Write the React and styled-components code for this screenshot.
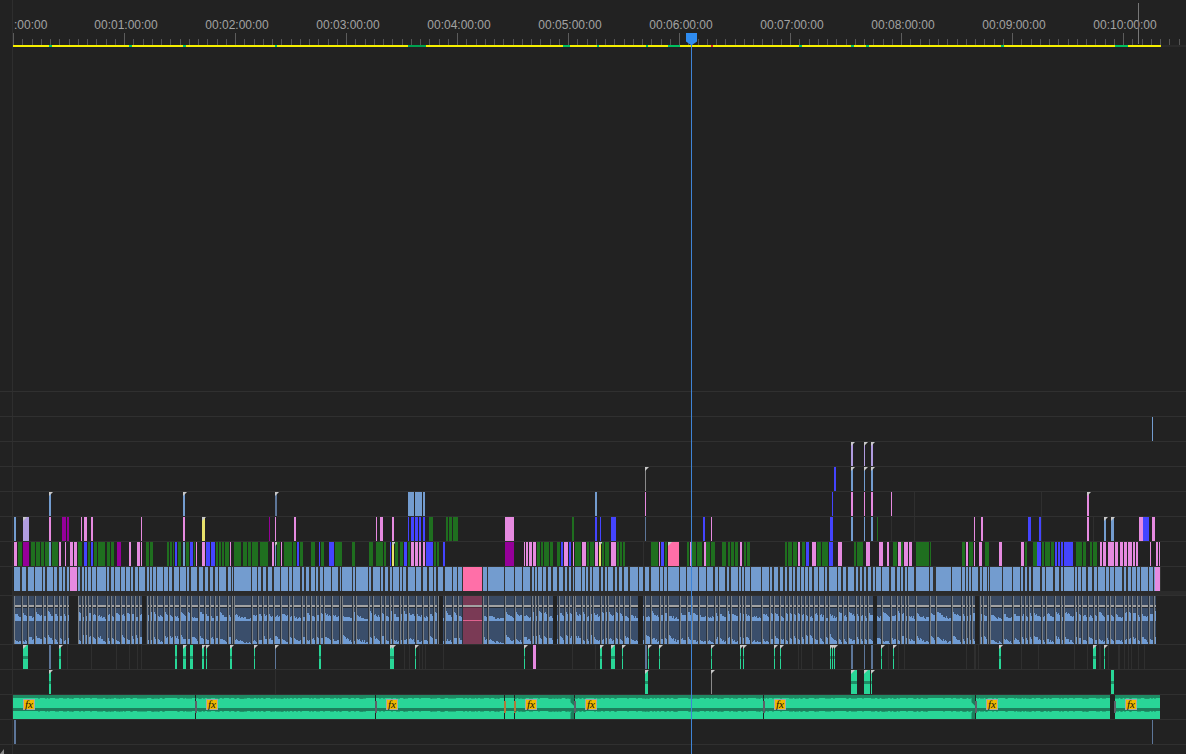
import React from 'react';
import styled, { createGlobalStyle } from 'styled-components';

const GUTTER = 13;
const MINUTE = 111;

const Global = createGlobalStyle`
  html, body { margin: 0; padding: 0; background: #222222; }
`;

const TONES = {
  g: '#1f6f1f',
  b: '#4444ff',
  p: '#e68ae0',
  m: '#96009a',
  l: '#739ccf',
  v: '#b09ce0',
  y: '#e8e26a',
  h: '#ff6fa8',
  d: '#2f2f2f',
  t: '#29d697',
  s: '#5d7699',
  w: '#8a8a8a',
};

// Each row is a list of clips: tone letter, start-end in page x, * for a corner flag
const ROWS = {
  r416: 'l1152-1153',
  r441: 'v851-853* v864-865* v871-873*',
  r466: 'b834-836 l851-853* l864-865* l871-873* w645-646*',
  r491: `l49-51* l183-185* s275-277* l408-414 l415-422 l423-425 l595-597 p645-646
    b832-833 p851-853 p864-865 p871-873 p891-892 d914-915 d1041-1042 p1087-1089*`,
  r516: `l14-16 v23-29* p49-51 m62-66 m67-69 p81-82 p84-87 p91-93 p141-142 p183-185 y202-205* m269-270
    p275-276 p294-296 p376-377 p380-383 p392-394 b408-409 b411-414 b415-418 b419-421 b423-425
    g429-433 g446-448 g449-452 g453-458 p505-514 g572-574 b595-597 b600-601 b611-616 s645-646
    b703-705 p711-712 b830-833 l851-853 l864-865 l871-873 g877-878 d891-892 d914-915 p974-975
    p981-983 b1028-1031 b1039-1041 d1041-1042 p1087-1089 d1093-1094 l1104-1106* l1111-1114*
    p1139-1143 b1143-1149 p1152-1155`,
  r541: `p14-17 g18-22 m23-29 g31-35 g36-40 g41-44 g45-49 l49-51 g52-58 p59-61 p65-66 p70-73 p74-77
    g78-82 b84-87 g88-90 b91-93 g94-97 g98-105 g107-110 g111-114 m117-121 p129-131 p137-140 p141-142
    g146-149 g150-153 g167-169 g170-172 g173-174 b175-177 g178-181 l183-185 g186-189 b190-193 g194-195
    p196-197 p202-205 b206-210 b211-215 g216-218 g219-221 g222-224 g225-229 p230-231 g234-241 g243-247
    g248-251 g252-258 g260-264 g264-268 p272-274 l275-276* g277-280 p281-282 g284-292 g293-296 b297-299
    g300-303 g311-315 b319-320 g321-324 b329-334 g335-342 g352-355 g369-373 g376-383 g384-386 b390-391
    y392-394* g395-398 g400-403 b404-407 g408-410 p411-414 p415-418 p419-421 p423-425 b426-433 g434-436
    g437-439 b443-445 m505-514 p524-525 p526-528 p529-532 p533-536 g537-540 g541-543 g544-549 g550-553
    g557-560 b561-563 p564-568 b569-571 p573-574 g575-581 p582-586 g587-589 g590-594 p595-598 y599-601*
    g602-604 g605-609 p611-616 g617-619 g620-622 g623-625 d643-644 g651-658 p659-660 b661-664 g665-667
    h668-679* g687-689 p690-691 g692-696 g697-702 p704-706 g706-710 g711-715 g722-726 g728-730 g731-734
    g735-738 p740-742 g744-746 g747-750 g785-787 g788-792 g793-797 p798-800 g802-805 b806-809 p812-816
    g817-821 g822-828 b829-833 p838-842 g854-856 g857-863 p866-870 p879-883 p887-889 g893-897 p898-901
    g901-903 p904-908 p909-912 g916-929 g930-931 g962-965 p966-968 g969-973 p974-975 p979-982 g985-989
    p999-1002 p1021-1024 g1025-1027 g1033-1037 b1037-1041 g1042-1044 g1045-1050 g1051-1054 b1055-1057
    b1058-1060 b1061-1063 b1064-1073 g1076-1082 g1083-1086 g1090-1092 g1093-1097 p1100-1102 p1103-1106
    p1108-1114 p1115-1118 p1120-1123 p1124-1127 p1128-1132 p1133-1135 p1136-1138 p1150-1151 p1156-1158
    p1159-1160`,
  r644: `t23-28* s49-51 t59-61* d67-68 d91-92 d116-117 d129-130 d137-138 d141-142 t175-177 t183-186* t190-193
    t202-204* t206-207* t230-232* t254-255* s275-276* t319-321 t390-392* t392-394* d404-405 d409-410 t415-416*
    d419-420 d422-423 d425-426 d443-444 t524-525* p533-536 d572-573 d595-596 t600-602* t611-615* t622-623*
    s645-647 t648-649* t659-660* t711-712* t740-741* t743-744* t774-775* t780-781* d798-799 d801-802 d812-813
    t830-831* t832-833* t834-835* s851-853 s864-865 s871-873 t881-882* d888-889 t893-894* d898-899 d904-905
    d966-967 d974-976 d978-979 t999-1001* d1021-1022 d1038-1039 d1074-1075 d1087-1088 t1093-1096* d1099-1101
    t1104-1105* d1108-1109 d1118-1120 d1124-1125 d1128-1129 d1131-1132 d1138-1139 d1144-1145`,
  r669: 't49-51* d275-276 t645-648* w711-712* t851-857* t864-870* t871-872* t1111-1114',
  r719: 's14-16 s1152-1153',
};

const parseClips = (text) =>
  [...text.matchAll(/([a-z])(\d+)-(\d+)(\*?)/g)].map((m) => ({
    tone: m[1],
    x: +m[2],
    w: +m[3] - +m[2],
    flag: m[4] === '*',
  }));

const seeded = (seed) => () => {
  seed = (seed + 0x6d2b79f5) | 0;
  let t = Math.imul(seed ^ (seed >>> 15), 1 | seed);
  t = (t + Math.imul(t ^ (t >>> 7), 61 | t)) ^ t;
  return ((t ^ (t >>> 14)) >>> 0) / 4294967296;
};

// long shots that stand out in the video row
const WIDE = [
  [70, 77], [97, 106], [157, 163], [234, 251], [342, 352], [356, 368], [463, 482], [483, 487], [488, 504],
  [505, 514], [515, 522], [575, 581], [630, 638], [651, 659], [668, 679], [680, 686], [751, 761], [762, 769],
  [829, 837], [916, 929], [936, 951], [952, 961], [990, 1002], [1003, 1012], [1013, 1020], [1064, 1074],
];

const buildShots = () => {
  const rnd = seeded(41);
  const sizes = [2, 2, 2, 3, 3, 3, 4, 4, 5, 6, 7];
  const shots = [];
  let x = 14;
  const fill = (limit) => {
    while (x < limit) {
      const w = Math.min(sizes[Math.floor(rnd() * sizes.length)], limit - x);
      shots.push({ x, w });
      x += w + (rnd() > 0.5 ? 2 : 1);
    }
  };
  WIDE.forEach(([a, b]) => {
    fill(a - 1);
    shots.push({ x: a, w: b - a });
    x = b + 1;
  });
  fill(1155);
  return shots;
};

const SHOTS = buildShots();
const AUDIO_GAPS = [[69, 78], [142, 146], [439, 443], [553, 557], [638, 643], [873, 877], [975, 979]];
const inAudioGap = (x) => AUDIO_GAPS.some(([a, b]) => x >= a && x < b);

// every shot starts loud and dies away, long shots end up nearly flat
const buildWave = (base, seed) => {
  const rnd = seeded(seed);
  let d = `M0 ${base}`;
  SHOTS.forEach((s) => {
    const start = 3 + rnd() * 6;
    for (let i = 0; i < s.w + 2; i += 1) {
      const x = s.x - GUTTER - 1 + i;
      const level = Math.max(1, start * Math.exp(-i / 7) + rnd() * 2.5 - 0.5);
      d += `H${x}V${Math.round(base - level)}`;
    }
  });
  return `${d}H1142V${base}Z`;
};

const buildTeeth = () => {
  const rnd = seeded(7);
  let d = '';
  for (let x = 24; x < 1147; x += 1) {
    if (x > 1096 && x < 1103) continue;
    if (rnd() > 0.72) d += `M${x} 3v1M${x} 16v1`;
  }
  return d;
};

const GREEN = [
  { x: 13, end: 195, fx: true },
  { x: 196, end: 375, fx: true },
  { x: 376, end: 504, fx: true },
  { x: 505, end: 514 },
  { x: 515, end: 574, fx: true, fade: true },
  { x: 575, end: 763, fx: true },
  { x: 764, end: 975, fx: true, fade: true },
  { x: 976, end: 1110, fx: true },
  { x: 1115, end: 1160, fx: true },
];

const WORK_MARKS = [
  [49, 3, '#00c060'], [129, 3, '#00c060'], [183, 3, '#00c060'], [275, 2, '#00c060'], [408, 18, '#00a050'],
  [563, 7, '#00c060'], [597, 2, '#00c060'], [646, 2, '#00c060'], [668, 12, '#00c060'], [711, 2, '#e02020'],
  [799, 3, '#00c060'], [851, 3, '#00c060'], [866, 3, '#00c060'], [1001, 3, '#00c060'], [1115, 13, '#00c060'],
];

const Page = styled.div`
  position: relative;
  width: 1186px;
  height: 754px;
  overflow: hidden;
  display: flex;
  flex-direction: column;
  background: #222222;
  font-family: "Liberation Sans", Arial, sans-serif;
`;

const Band = styled.div`
  display: flex;
  flex: ${(p) => (p.$grow ? '1' : 'none')};
  height: ${(p) => (p.$h ? `${p.$h}px` : 'auto')};
  box-sizing: border-box;
  border-top: ${(p) => (p.$line ? '1px solid #303030' : 'none')};
`;

const Gutter = styled.div`
  flex: none;
  width: ${GUTTER}px;
  box-sizing: border-box;
  border-right: 1px solid #2e2e2e;
`;

const Lane = styled.div`
  position: relative;
  flex: 1;
  min-width: 0;
`;

const RulerLane = styled.div`
  flex: 1;
  min-width: 0;
  overflow: hidden;
  display: flex;
  flex-direction: column;
`;

const Labels = styled.div`
  display: flex;
  height: 33px;
  box-sizing: border-box;
  padding-top: 18px;
`;

const TimeLabel = styled.span`
  flex: none;
  width: ${MINUTE}px;
  text-align: center;
  font-size: 12px;
  line-height: 15px;
  color: #a2a2a2;
`;

// the zero label only shows its tail before the lane edge
const FirstLabel = styled(TimeLabel)`
  width: 57.5px;
  padding-left: 1px;
  box-sizing: border-box;
  text-align: left;
`;

const Ticks = styled.div`
  display: flex;
  height: 12px;
`;

const MinuteTicks = styled.div`
  flex: none;
  width: ${MINUTE}px;
  display: flex;
  align-items: flex-end;
`;

const Tick = styled.i`
  flex: 1;
  height: ${(p) => (p.$major ? '12px' : '6px')};
  box-sizing: border-box;
  border-left: 1px solid ${(p) => (p.$major ? '#5c5c5c' : '#555555')};
`;

const WorkArea = styled.div`
  position: relative;
  height: 2px;
  background: #2a2a2a;
`;

const WorkBar = styled.div`
  width: 1148px;
  height: 2px;
  background: #f6f000;
`;

const WorkMark = styled.i`
  position: absolute;
  top: 0;
  height: 2px;
`;

const Clip = styled.div`
  position: absolute;
  top: 0;
  bottom: 0;
  background: ${(p) => TONES[p.$tone]};

  ${(p) => p.$tone === 't' && `
    background: linear-gradient(#29d697 0 11px, #1c8f66 11px 14px, #29d697 14px);
  `}

  ${(p) => p.$flag && `
    &::before {
      content: '';
      position: absolute;
      left: 0;
      top: 0;
      width: 4px;
      height: 4px;
      background: #c8c8c8;
      clip-path: polygon(0 0, 100% 0, 0 100%);
    }
  `}
`;

const Clips = ({ text }) =>
  parseClips(text).map((c) => (
    <Clip key={c.x + c.tone} $tone={c.tone} $flag={c.flag} style={{ left: c.x - GUTTER, width: c.w }} />
  ));

const VideoBed = styled.div`
  position: absolute;
  left: 1px;
  width: 1147px;
  top: 0;
  bottom: 0;
  background: #333333;
`;

const Shot = styled.div`
  position: absolute;
  top: 0;
  bottom: 0;
  background: ${(p) => p.$bg};
`;

const Divider = styled.div`
  height: 4px;
  background: #2b2b2b;
`;

const AudioBed = styled.div`
  position: absolute;
  left: 1px;
  width: 1142px;
  top: 0;
  bottom: 0;
  background: linear-gradient(
    #3a4a62 0 9px,
    #a2a2a2 9px 11px,
    #232a34 11px 12px,
    #3a4e6b 12px
  );
`;

const WaveSvg = styled.svg`
  position: absolute;
  left: 1px;
  top: 0;
`;

const AudioCut = styled.div`
  position: absolute;
  top: 0;
  bottom: 0;
  width: 1px;
  background: #7c8186;
  box-shadow: -1px 0 0 #2a323d;
`;

const AudioGap = styled.div`
  position: absolute;
  top: 0;
  bottom: 0;
  background: #222222;
`;

const MutedClip = styled.div`
  position: absolute;
  top: 0;
  bottom: 0;
  background:
    linear-gradient(#e0628f, #e0628f) 0 24px / 100% 1px no-repeat,
    linear-gradient(#e0628f, #e0628f) 0 48px / 100% 1px no-repeat,
    linear-gradient(#7a3a55 0 9px, #a2a2a2 9px 11px, #5a2a3e 11px 12px, #7a3a55 12px);
`;

const GreenClip = styled.div`
  position: absolute;
  top: 0;
  bottom: 0;
  background: linear-gradient(#1d8a63 0 3px, #29d697 3px 13px, #1d7f5c 13px 16px, #29d697 16px);
`;

const Fade = styled.div`
  position: absolute;
  right: 0;
  top: 0;
  bottom: 0;
  width: 5px;
  background: #1d7f5c;
  clip-path: polygon(100% 0, 100% 100%, 30% 100%, 30% 75%, 100% 55%, 100% 45%, 30% 30%, 30% 0);
`;

const Handle = styled.i`
  position: absolute;
  top: 6px;
  height: 12px;
  width: 2px;
  left: -1px;
  background: ${(p) => p.$tone || '#5f6068'};
`;

const FxBadge = styled.span`
  position: absolute;
  left: 10px;
  top: 4px;
  width: 12px;
  height: 11px;
  box-sizing: border-box;
  border: 1px solid #a8a8a8;
  background: #f2b800;
  color: #111111;
  font-family: "Liberation Serif", serif;
  font-style: italic;
  font-size: 11px;
  line-height: 9px;
  text-align: center;
`;

const TeethSvg = styled.svg`
  position: absolute;
  left: 0;
  top: 0;
`;

const Playhead = styled.div`
  position: absolute;
  left: 691px;
  top: 40px;
  bottom: 0;
  width: 1px;
  background: #3f84d6;
`;

const PlayheadCap = styled.div`
  position: absolute;
  left: 686px;
  top: 33px;
  width: 11px;
  height: 12px;
  background: #2f8cf0;
  clip-path: polygon(0 0, 100% 0, 100% 70%, 55% 100%, 45% 100%, 0 70%);
`;

const SceneMark = styled.div`
  position: absolute;
  left: 1138px;
  top: 3px;
  width: 1px;
  height: 41px;
  background: #777777;
`;

const CornerGrip = styled.div`
  position: absolute;
  left: 0;
  bottom: 0;
  width: 4px;
  height: 5px;
  background: #8a8a8a;
  clip-path: polygon(100% 0, 100% 100%, 0 100%);
`;

const TrackRow = ({ children, h = 25 }) => (
  <Band $h={h} $line>
    <Gutter />
    <Lane>{children}</Lane>
  </Band>
);

const Ruler = () => (
  <Band $h={47}>
    <Gutter />
    <RulerLane>
      <Labels>
        <FirstLabel>:00:00</FirstLabel>
        {Array.from({ length: 10 }, (_, i) => (
          <TimeLabel key={i}>{`00:${String(i + 1).padStart(2, '0')}:00:00`}</TimeLabel>
        ))}
      </Labels>
      <Ticks>
        {Array.from({ length: 11 }, (_, m) => (
          <MinuteTicks key={m}>
            {Array.from({ length: 12 }, (_, i) => <Tick key={i} $major={i === 0} />)}
          </MinuteTicks>
        ))}
      </Ticks>
      <WorkArea>
        <WorkBar />
        {WORK_MARKS.map(([x, w, color]) => (
          <WorkMark key={x} style={{ left: x - GUTTER, width: w, background: color }} />
        ))}
      </WorkArea>
    </RulerLane>
  </Band>
);

const VideoTrack = () => (
  <TrackRow>
    <VideoBed />
    {SHOTS.map((s) => (
      <Shot key={s.x} $bg={s.x === 463 ? TONES.h : s.x === 70 ? TONES.p : TONES.l} style={{ left: s.x - GUTTER, width: s.w }} />
    ))}
    <Shot $bg={TONES.p} style={{ left: 1155 - GUTTER, width: 5 }} />
  </TrackRow>
);

const AudioTrack = () => (
  <TrackRow h={49}>
    <AudioBed />
    <WaveSvg width="1142" height="49" viewBox="0 0 1142 49">
      <path d={buildWave(24, 11)} fill="#6f9bd3" />
      <path d={buildWave(48, 23)} fill="#6f9bd3" />
      <path d="M0 24.5H1142M0 47.5H1142" stroke="#6f9bd3" />
    </WaveSvg>
    {SHOTS.filter((s) => !inAudioGap(s.x)).map((s) => (
      <AudioCut key={s.x} style={{ left: s.x - GUTTER }} />
    ))}
    <MutedClip style={{ left: 463 - GUTTER, width: 19 }} />
    {AUDIO_GAPS.map(([a, b]) => (
      <AudioGap key={a} style={{ left: a - GUTTER, width: b - a }} />
    ))}
  </TrackRow>
);

const GreenTrack = () => (
  <TrackRow>
    {GREEN.map((c) => (
      <GreenClip key={c.x} style={{ left: c.x - GUTTER, width: c.end - c.x }}>
        {c.fade && <Fade />}
        {c.x > 13 && <Handle $tone={c.x === 505 || c.x === 515 ? '#b07a3a' : undefined} />}
      </GreenClip>
    ))}
    <TeethSvg width="1148" height="24" viewBox="0 0 1148 24">
      <path d={buildTeeth()} stroke="#1d7f5c" fill="none" />
    </TeethSvg>
    {GREEN.filter((c) => c.fx).map((c) => (
      <FxBadge key={c.x} style={{ marginLeft: c.x - GUTTER }}>fx</FxBadge>
    ))}
  </TrackRow>
);

export default function App() {
  return (
    <Page>
      <Global />
      <Ruler />
      <Band $grow>
        <Gutter />
      </Band>
      <TrackRow />
      <TrackRow><Clips text={ROWS.r416} /></TrackRow>
      <TrackRow><Clips text={ROWS.r441} /></TrackRow>
      <TrackRow><Clips text={ROWS.r466} /></TrackRow>
      <TrackRow><Clips text={ROWS.r491} /></TrackRow>
      <TrackRow><Clips text={ROWS.r516} /></TrackRow>
      <TrackRow><Clips text={ROWS.r541} /></TrackRow>
      <VideoTrack />
      <Band $h={4}>
        <Gutter />
        <Lane><Divider /></Lane>
      </Band>
      <AudioTrack />
      <TrackRow><Clips text={ROWS.r644} /></TrackRow>
      <TrackRow><Clips text={ROWS.r669} /></TrackRow>
      <GreenTrack />
      <TrackRow><Clips text={ROWS.r719} /></TrackRow>
      <TrackRow h={10} />
      <SceneMark />
      <Playhead />
      <PlayheadCap />
      <CornerGrip />
    </Page>
  );
}
